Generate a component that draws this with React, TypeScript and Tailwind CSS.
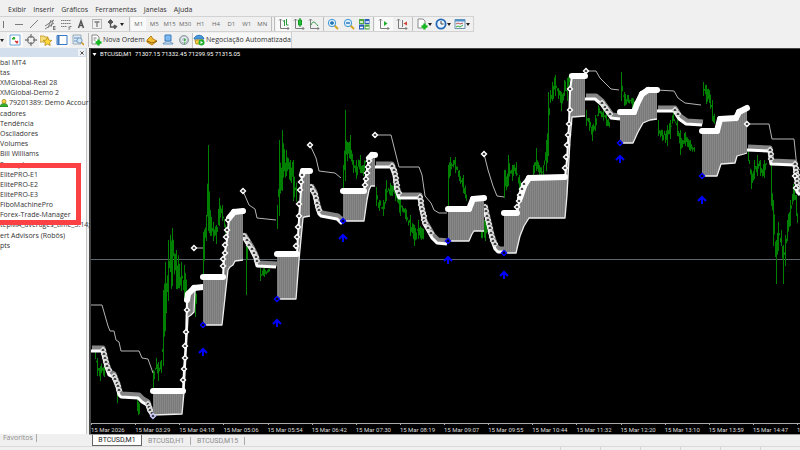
import type { ReactNode } from 'react';
import clsx from 'clsx';

type Point = [number, number];
type Range = [number, number, number];

const menus = ['Exibir', 'Inserir', 'Gráficos', 'Ferramentas', 'Janelas', 'Ajuda'];
const timeframes = ['M1', 'M5', 'M15', 'M30', 'H1', 'H4', 'D1', 'W1', 'MN'];
const times = [
  '15 Mar 2026', '15 Mar 03:29', '15 Mar 04:18', '15 Mar 05:06', '15 Mar 05:54', '15 Mar 06:42',
  '15 Mar 07:30', '15 Mar 08:19', '15 Mar 09:07', '15 Mar 09:55', '15 Mar 10:44', '15 Mar 11:32',
  '15 Mar 12:20', '15 Mar 13:10', '15 Mar 13:59', '15 Mar 14:47',
];

// outer stop line
const outer: Point[][] = [
  [[91, 305], [102, 305], [108, 326], [110, 331], [114, 331], [116, 340], [119, 342], [121, 351], [139, 351], [142, 358], [148, 359], [153, 373]],
  [[194, 248], [203, 248]],
  [[243, 191], [249, 205], [255, 209], [257, 218], [276, 220]],
  [[310, 145], [316, 158], [319, 171], [335, 173], [341, 178]],
  [[375, 135], [391, 135], [396, 155], [399, 167], [419, 167], [422, 175], [425, 196], [431, 203], [434, 210], [439, 213], [447, 213]],
  [[484, 154], [488, 170], [493, 186], [497, 196], [504, 197]],
  [[586, 71], [596, 71], [600, 78], [606, 84], [611, 89], [619, 90]],
  [[657, 90], [674, 91], [678, 98], [685, 103], [701, 105]],
  [[747, 124], [769, 124], [772, 139], [794, 139], [797, 168], [800, 170]],
];

// falling trend, drawn with a grey band on top
const falling: Point[][] = [
  [[91, 351], [102, 351], [106, 367], [109, 375], [113, 377], [117, 387], [119, 395], [121, 397], [138, 398], [142, 402], [147, 405], [149, 411], [153, 417]],
  [[243, 237], [251, 250], [255, 258], [257, 266], [276, 267]],
  [[310, 188], [314, 195], [317, 208], [319, 214], [321, 216], [337, 219], [341, 223], [343, 221]],
  [[375, 167], [391, 167], [394, 175], [396, 190], [399, 198], [419, 198], [421, 210], [424, 224], [427, 229], [432, 238], [437, 243], [447, 244]],
  [[484, 208], [488, 225], [491, 238], [495, 249], [498, 252], [504, 252]],
  [[585, 99], [595, 99], [601, 104], [606, 111], [611, 118], [620, 119]],
  [[657, 111], [674, 111], [679, 119], [686, 124], [702, 125]],
  [[747, 150], [769, 151], [771, 164], [794, 165], [796, 180], [797, 192], [800, 195]],
];

// rising trend: filled between the upper and the lower line
const rising: { top: Point[]; low: Point[] }[] = [
  {
    top: [[153, 391], [183, 391], [184, 370], [186, 340], [187, 300], [188, 294], [194, 288], [203, 287]],
    low: [[153, 415], [182, 414], [184, 392], [188, 317], [191, 315], [194, 312], [195, 290]],
  },
  {
    top: [[203, 277], [223, 277], [224, 258], [227, 240], [229, 218], [234, 212], [243, 211]],
    low: [[203, 325], [222, 325], [228, 270], [230, 267], [233, 265], [235, 261], [243, 260]],
  },
  {
    top: [[277, 254], [297, 254], [298, 235], [300, 205], [302, 175], [303, 171], [310, 171]],
    low: [[277, 299], [296, 299], [299, 260], [303, 218], [304, 217], [310, 216]],
  },
  {
    top: [[343, 191], [364, 191], [366, 175], [369, 158], [372, 155], [375, 155]],
    low: [[343, 221], [364, 221], [367, 200], [369, 190], [371, 186], [375, 186]],
  },
  {
    top: [[448, 209], [469, 209], [473, 199], [484, 198]],
    low: [[448, 241], [469, 241], [472, 234], [474, 231], [484, 231]],
  },
  {
    top: [[504, 213], [517, 213], [520, 198], [524, 186], [529, 178], [565, 177], [567, 160], [569, 125], [570, 90], [572, 76], [585, 76]],
    low: [[504, 253], [516, 253], [520, 236], [524, 226], [529, 218], [565, 218], [567, 195], [570, 140], [572, 117], [585, 116]],
  },
  {
    top: [[620, 112], [634, 112], [637, 104], [642, 94], [648, 90], [657, 90]],
    low: [[620, 143], [633, 143], [638, 132], [643, 123], [650, 120], [657, 119]],
  },
  {
    top: [[702, 131], [717, 131], [720, 119], [736, 118], [739, 112], [747, 108]],
    low: [[702, 176], [717, 176], [721, 164], [735, 163], [737, 156], [744, 154], [747, 153]],
  },
];

// x, high, low
const bars: Range[][] = [
  [[95, 352, 358], [97, 358, 375], [100, 366, 380], [104, 354, 376], [106, 366, 372]],
  [[117, 388, 402], [118, 392, 398]],
  [[137, 398, 410], [138, 402, 414], [140, 402, 414]],
  [[153, 370, 390], [156, 358, 368], [158, 362, 380], [161, 360, 372], [163, 290, 365], [165, 262, 330], [168, 240, 300], [172, 228, 285], [176, 250, 288], [181, 262, 290], [184, 265, 300], [187, 285, 300]],
  [[195, 290, 316], [197, 290, 305]],
  [[203, 232, 277], [206, 215, 240], [208, 145, 230], [210, 210, 235], [213, 222, 240], [216, 225, 243], [219, 198, 225], [222, 205, 220], [226, 225, 240]],
  [[246, 240, 294], [248, 250, 262]],
  [[260, 268, 280], [264, 268, 276], [270, 266, 272]],
  [[277, 205, 228], [279, 140, 215], [282, 130, 190], [286, 150, 175], [290, 160, 180], [293, 160, 200], [297, 190, 210]],
  [[343, 165, 191], [345, 110, 180], [347, 142, 160], [350, 135, 158], [353, 160, 172], [356, 160, 178], [360, 155, 172], [363, 165, 175], [366, 145, 170]],
  [[376, 187, 205], [379, 200, 210], [383, 200, 215], [386, 180, 200], [390, 183, 195], [395, 185, 200], [400, 195, 215], [405, 208, 218], [410, 215, 235], [414, 225, 245], [418, 220, 238], [424, 228, 240]],
  [[448, 165, 205], [450, 157, 175], [455, 157, 172], [459, 170, 180], [463, 175, 192], [467, 190, 205]],
  [[481, 230, 237], [485, 215, 240], [488, 230, 238]],
  [[504, 170, 197], [508, 155, 185], [512, 165, 180], [516, 162, 175], [519, 175, 190], [521, 180, 190]],
  [[533, 165, 178], [536, 148, 170], [539, 165, 175], [543, 165, 178], [546, 140, 170], [548, 92, 155], [550, 90, 102], [552, 82, 100], [555, 75, 95], [558, 88, 98], [561, 92, 110], [564, 80, 95], [567, 78, 100], [570, 68, 80]],
  [[586, 110, 125], [589, 118, 130], [592, 125, 140], [595, 115, 130], [598, 105, 115], [606, 112, 125], [610, 120, 132]],
  [[621, 72, 100], [624, 92, 105], [628, 95, 102], [632, 98, 108], [636, 100, 110]],
  [[658, 120, 135], [662, 130, 140], [667, 125, 145], [670, 120, 138], [673, 112, 120], [677, 120, 135], [680, 130, 154], [685, 132, 145], [690, 140, 150], [695, 148, 155]],
  [[703, 82, 95], [706, 85, 103], [709, 90, 102], [712, 100, 120], [715, 118, 130]],
  [[748, 150, 160], [751, 170, 188], [754, 160, 178], [757, 155, 175], [760, 160, 175], [764, 160, 177], [767, 152, 165]],
  [[771, 165, 205], [773, 200, 245], [776, 240, 283], [778, 222, 250], [781, 230, 245], [783, 245, 283], [785, 235, 265], [787, 220, 240], [790, 200, 225], [793, 184, 200], [796, 195, 215], [798, 200, 240]],
];

const diamonds: Point[] = [
  [194, 248], [243, 191], [310, 145], [375, 135], [484, 154], [586, 71], [747, 124],
  [187, 310], [186, 332], [185, 346], [185, 358], [184, 369], [183, 380],
  [223, 266], [223, 259], [225, 253], [225, 245], [226, 237], [227, 230], [228, 220],
  [296, 246], [297, 237], [298, 227], [299, 216], [299, 204], [300, 190], [301, 182], [302, 175],
  [365, 185], [366, 179], [367, 173], [368, 167], [369, 161],
  [517, 207], [519, 201], [520, 195], [522, 189], [524, 184],
  [570, 89], [570, 110], [569, 124], [568, 135], [567, 145], [566, 157], [565, 168],
  [795, 176], [796, 188],
];
const signals: Point[] = [[203, 325], [277, 299], [343, 221], [448, 241], [504, 253], [620, 143], [702, 176]];
const arrows: Point[] = [[203, 352], [277, 323], [343, 238], [448, 260], [504, 275], [620, 159], [702, 200]];

const join = (pts: Point[]) => pts.map((p) => p.join(',')).join(' ');
const noise = (n: number) => Math.abs(Math.sin(n * 12.9898) * 43758.5453) % 1;

function barPath(list: Range[]) {
  let d = '';
  for (let i = 0; i < list.length - 1; i++) {
    const [x0, h0, l0] = list[i];
    const [x1, h1, l1] = list[i + 1];
    for (let x = x0; x < x1; x++) {
      const t = (x - x0) / (x1 - x0);
      const high = h0 + (h1 - h0) * t;
      const low = l0 + (l1 - l0) * t;
      const trim = x === x0 ? 0 : (low - high) * 0.6;
      const a = high + trim * noise(x);
      const b = low - trim * noise(x + 7);
      d += `M${x + 0.5} ${Math.min(a, b)}V${Math.max(a, b) + 1}`;
    }
  }
  return d;
}

// marks along the steep parts of a line
function steepMarks(line: Point[]) {
  const marks: Point[] = [];
  for (let i = 0; i < line.length - 1; i++) {
    const [x0, y0] = line[i];
    const [x1, y1] = line[i + 1];
    if (y1 - y0 <= x1 - x0) continue;
    const n = Math.max(1, Math.round((y1 - y0) / 4));
    for (let k = 0; k < n; k++) {
      marks.push([Math.round(x0 + ((x1 - x0) * k) / n), Math.round(y0 + ((y1 - y0) * k) / n)]);
    }
  }
  return marks;
}

function Diamond({ at: [x, y], color = '#fff', fill = '#333' }: { at: Point; color?: string; fill?: string }) {
  return <path d={`M${x - 2.5} ${y}l2.500-2.500 2.500 2.500-2.500 2.500z`} fill={fill} stroke={color} strokeWidth="1.4" />;
}

function Chart() {
  return (
    <svg viewBox="91 49 709 374" preserveAspectRatio="xMinYMin slice" className="block h-full w-full" aria-label="BTCUSD,M1">
      <defs>
        <pattern id="hatch" width="2" height="4" patternUnits="userSpaceOnUse">
          <rect width="2" height="4" fill="#7a7a7a" />
          <rect width="1" height="4" fill="#878787" />
        </pattern>
      </defs>
      <path d="M91 259.5H800" stroke="#5c6670" />
      <g stroke="#008000" fill="none">
        {bars.map((b) => (
          <path key={b[0][0]} d={barPath(b)} />
        ))}
      </g>
      <g fill="none" stroke="#b4b4b4">
        {outer.map((l) => (
          <polyline key={l[0][0]} points={join(l)} />
        ))}
      </g>
      {falling.map((l) => (
        <g key={l[0][0]} fill="none" strokeLinejoin="round">
          <polyline points={join(l.map(([x, y]): Point => [x + 1, y - 3]))} stroke="#858585" strokeWidth="5" />
          <polyline points={join(l)} stroke="#fff" strokeWidth="3" />
          {steepMarks(l).map((m, i) => (
            <Diamond key={i} at={[m[0] + 1, m[1] - 1]} color="#e4e4e4" />
          ))}
        </g>
      ))}
      {rising.map(({ top, low }) => (
        <g key={top[0][0]} strokeLinejoin="round">
          <polygon points={join([...top, ...[...low].reverse()])} fill="url(#hatch)" />
          <polyline points={join(low)} fill="none" stroke="#eee" strokeWidth="1.3" />
          <polyline points={join(top)} fill="none" stroke="#fff" strokeWidth="2" />
          {top.slice(1).map(([x, y], i) => {
            const [px, py] = top[i];
            return Math.abs(y - py) < 13 ? (
              <path key={x} d={`M${px} ${py}L${x} ${y}`} stroke="#fff" strokeWidth="6" strokeLinecap="round" />
            ) : null;
          })}
        </g>
      ))}
      {diamonds.map((d, i) => (
        <Diamond key={i} at={d} />
      ))}
      {signals.map((d) => (
        <Diamond key={d[0]} at={d} color="#0000ff" fill="#000" />
      ))}
      <Diamond at={[153, 416]} color="#c8c8ff" />
      {arrows.map(([x, y]) => (
        <path key={x} d={`M${x} ${y + 4}V${y - 3}M${x - 4} ${y + 1}l4-4 4 4`} fill="none" stroke="#0000ff" strokeWidth="2" />
      ))}
    </svg>
  );
}

function Icon({ children }: { children: ReactNode }) {
  return (
    <svg viewBox="0 0 12 12" className="size-3 shrink-0" fill="none" stroke="#7c7c7c" aria-hidden="true">
      {children}
    </svg>
  );
}

const axes = <path d="M2.500 1v9.500H11M1 2.500l1.500-1.500 1.500 1.500M9.500 9l1.500 1.500-1.500 1.500" />;

const drawIcons: [string, ReactNode][] = [
  ['Linha horizontal', <path d="M2 6.500h8" />],
  ['Linha de tendência', <path d="M2 10l8-8" />],
  ['Canal', <path d="M1 8l9-6M1 11l9-6M4 10l3-8M7 9l2-7M9.500 8v4M9.500 8.500h2M9.500 10h2M9.500 11.500h2" />],
  ['Fibonacci', <path d="M1 2.500h10M1 5.500h10M1 8.500h6M9 12V8.500h3M9 10h2" strokeDasharray="1.500 .5" />],
  ['Texto', <path d="M3.500 10l2.500-7 2.500 7M4.500 7.500h3" strokeWidth="1.500" stroke="#555" />],
  ['Etiqueta', <><path d="M1.500 1.500h9v9h-9z" strokeDasharray="1 1" /><path d="M3.500 4h5M6 4v5" strokeWidth="1.300" /></>],
  ['Setas', <><path d="M2 4l2.500-2.500L7 4 4.500 6zM8 7l3 1.500L8.500 11z" fill="#555" stroke="#555" /><path d="M4.500 5v4h4" stroke="#555" strokeWidth="1.300" /></>],
];

function Tool({ label, active, children }: { label: string; active?: boolean; children: ReactNode }) {
  return (
    <button
      type="button"
      aria-label={label}
      className={clsx('flex h-[14px] flex-1 items-center justify-center', active && 'bg-[#f9f9f9]')}
    >
      {children}
    </button>
  );
}

function Caret() {
  return (
    <svg viewBox="0 0 4 3" className="h-[3px] w-1 shrink-0" aria-hidden="true">
      <path d="M0 0h4L2 3z" fill="#222" />
    </svg>
  );
}

function Separator() {
  return <span className="mx-px h-[14px] w-px shrink-0 bg-[#bdbdbd]" />;
}

const page = (color: string) => <path d="M2 1h5l2 2v7H2z" fill="#fff" stroke={color} />;
const plus = <path d="M8.500 5.500v6M5.500 8.500h6" stroke="#12b81e" strokeWidth="2.400" />;

function DrawingBar() {
  return (
    <div className="flex h-4 w-[474px] items-center border-y border-r border-[#d2d2d2] pr-px">
      <button type="button" aria-label="Linha vertical" className="flex w-[11px] justify-start pl-[3px] text-[#666]">
        <span className="h-[7px] w-px bg-[#777]" />
      </button>
      <div className="flex w-[109px] shrink-0">
        {drawIcons.map(([label, icon]) => (
          <Tool key={label} label={label}>
            <Icon>{icon}</Icon>
          </Tool>
        ))}
      </div>
      <Caret />
      <span className="w-1" />
      <Separator />
      <div className="flex w-[139px] shrink-0 font-['Open_Sans',sans-serif] text-[6px] text-[#666]">
        {timeframes.map((t, i) => (
          <Tool key={t} label={t} active={i === 0}>
            {t}
          </Tool>
        ))}
      </div>
      <Separator />
      <Separator />
      <div className="flex w-[46px] shrink-0">
        <Tool label="Barras" active>
          <Icon>{axes}<path d="M6.500 2v6M5 3h1.500M8.500 1v6M8.500 7h2" stroke="#2b9c3c" /></Icon>
        </Tool>
        <Tool label="Velas">
          <Icon>{axes}<path d="M7 0v9" stroke="#118822" /><path d="M5.500 2h3v5h-3z" fill="#22c034" stroke="#119922" /></Icon>
        </Tool>
        <Tool label="Linha">
          <Icon>{axes}<path d="M3 7c2-5 4-3 7 1" stroke="#2b9c3c" /></Icon>
        </Tool>
      </div>
      <Separator />
      <div className="flex w-[47px] shrink-0">
        <Tool label="Ampliar">
          <Icon><path d="M7.500 7.500L11 11" stroke="#d9a520" strokeWidth="2" /><circle cx="5" cy="5" r="3.700" fill="#d6efff" stroke="#4696d2" /><path d="M3 5h4M5 3v4" stroke="#1767aa" strokeWidth="1.300" /></Icon>
        </Tool>
        <Tool label="Reduzir">
          <Icon><path d="M7.500 7.500L11 11" stroke="#d9a520" strokeWidth="2" /><circle cx="5" cy="5" r="3.700" fill="#d6efff" stroke="#4696d2" /><path d="M3 5h4" stroke="#1767aa" strokeWidth="1.300" /></Icon>
        </Tool>
        <Tool label="Organizar janelas">
          <Icon>
            <path d="M1 1h5v5H1zM6.500 6.500h5v5h-5z" fill="#4da83f" stroke="none" />
            <path d="M6.500 1h5v5h-5zM1 6.500h5v5H1z" fill="#2a5db8" stroke="none" />
            <path d="M2 4h3M7.500 4H11M2 9.500h3M7.500 9.500H11" stroke="#fff" strokeWidth="1.500" />
          </Icon>
        </Tool>
      </div>
      <Separator />
      <div className="flex w-9 shrink-0">
        <Tool label="Rolagem automática" active>
          <Icon>{axes}<path d="M6 3l3.500 2.500L6 8z" fill="#20b030" stroke="none" /></Icon>
        </Tool>
        <Tool label="Deslocar gráfico">
          <Icon>{axes}<path d="M6.500 2v7" /><path d="M11 3.500L7.500 5.500 11 7.500z" fill="#d04030" stroke="none" /></Icon>
        </Tool>
      </div>
      <Separator />
      <div className="flex flex-1 items-center">
        <Tool label="Indicadores"><Icon>{page('#888')}{plus}</Icon><Caret /></Tool>
        <Tool label="Períodos">
          <Icon><circle cx="6" cy="6" r="4.600" fill="#e8f4ff" stroke="#2569b4" strokeWidth="1.800" /><path d="M6 3v3h2.500" stroke="#444" /></Icon>
          <Caret />
        </Tool>
        <Tool label="Modelos">
          <Icon><path d="M1 1.500h10v9H1z" fill="#eef5fa" stroke="#6d93ad" /><path d="M1 2.500h10" stroke="#4d90cc" strokeWidth="2" /><path d="M2 6l2-1 2 1 3-1" stroke="#b55" /><path d="M2 9l2-1 2 1 3-2" stroke="#3a3" /></Icon>
          <Caret />
        </Tool>
      </div>
    </div>
  );
}

function StandardBar() {
  return (
    <div className="flex h-4 w-[292px] items-center border-r border-[#cfcfcf]">
      <span className="w-[7px] shrink-0"><Caret /></span>
      <div className="flex w-[79px] shrink-0">
        <Tool label="Observação do mercado" active>
          <Icon><path d="M1 1h10v10H1z" fill="#fff" stroke="#6aa6d8" /><path d="M3 5l2-2 1 2z" stroke="#2a2" fill="#3b3" /><path d="M6 7l3 2M7 9l2-2" stroke="#d33" strokeWidth="1.500" /></Icon>
        </Tool>
        <Tool label="Janela de dados">
          <Icon><circle cx="6" cy="6" r="3.500" strokeWidth="1.300" /><path d="M6 0v4M6 8v4M0 6h4M8 6h4" strokeWidth="1.300" /></Icon>
        </Tool>
        <Tool label="Navegador" active>
          <Icon><path d="M0 2h4l1 1h3v5H0z" fill="#f4dc7a" stroke="#caa238" /><path d="M7.500 3.500l1.300 2.600 3 .4-2.200 2 .6 3-2.700-1.500L4.900 11.500l.5-3-2.100-2 2.900-.4z" fill="#ffd93b" stroke="#b98a14" strokeWidth=".8" /></Icon>
        </Tool>
        <Tool label="Terminal" active>
          <Icon><path d="M1 1.500h10v9H1z" fill="#fff" stroke="#3b78c2" /><path d="M2.500 2v8" stroke="#3b78c2" strokeWidth="2" /></Icon>
        </Tool>
        <Tool label="Testador de estratégia">
          <Icon><path d="M1 1h8v9H1z" fill="#dfeaf5" stroke="#9ab" /><path d="M2 4h5M2 7h3" stroke="#5b94cc" /><circle cx="7.500" cy="6.500" r="2.600" fill="#cfe7fa" stroke="#7899b5" /><path d="M9.500 8.500L12 11" stroke="#cc9a26" strokeWidth="1.600" /></Icon>
        </Tool>
      </div>
      <span className="w-px" />
      <Separator />
      <button type="button" className="flex w-[54px] shrink-0 items-center gap-px whitespace-nowrap">
        <Icon>{page('#888')}<path d="M3.500 4h3M3.500 6h2" />{plus}</Icon>
        Nova Ordem
      </button>
      <div className="flex w-12 shrink-0">
        <Tool label="MetaEditor">
          <Icon><path d="M1 6l4-4 2 3 4 2-5 4-5-3z" fill="#f3bd32" stroke="#b77d14" /><path d="M1 7l5 2 5-2" stroke="#8d5f10" /></Icon>
        </Tool>
        <Tool label="Conta">
          <Icon><path d="M3 1h6v6H3z" fill="#7db8ee" stroke="#3f7fc0" /><path d="M1 10c0-3 10-3 10 0z" fill="#d4e6f7" stroke="#6b94bc" /></Icon>
        </Tool>
        <Tool label="Sinais">
          <Icon><circle cx="6" cy="6" r="4.500" fill="#b9c7cc" stroke="#8e9da3" /><path d="M6 4.500A2 2 0 018 7l-2 4z" fill="#3eae4b" stroke="none" /><circle cx="6" cy="5.500" r="2.500" stroke="#f3f3f3" /></Icon>
        </Tool>
      </div>
      <button type="button" className="flex h-[15px] flex-1 items-center gap-px whitespace-nowrap border-l border-[#c5c5c5] bg-[#f8f8f8]">
        <Icon><path d="M1 5c1-5 9-5 10 0z" fill="#4a9bdb" stroke="#2c74b4" /><path d="M2 6h8l-1 4H3z" fill="#f6cf4a" stroke="#b78f20" /><circle cx="8.500" cy="8.500" r="3" fill="#20b02c" stroke="none" /><path d="M7.500 7v3l2.500-1.500z" fill="#fff" stroke="none" /></Icon>
        Negociação Automatizada
      </button>
    </div>
  );
}

function TreeItem({ children }: { children?: ReactNode }) {
  return <li className="flex h-[10px] items-center whitespace-nowrap">{children}</li>;
}

function Navigator() {
  return (
    <aside className="flex w-[87px] shrink-0 flex-col border-r border-[#c4c4c4] bg-white">
      <div className="flex h-[9px] shrink-0 items-center justify-end bg-[#d3dfed] pr-px">
        <button type="button" aria-label="Fechar" className="flex size-[7px] items-center justify-center bg-[#eef2f6]">
          <svg viewBox="0 0 5 5" className="size-1" stroke="#222" aria-hidden="true"><path d="M.5.5l4 4m0-4l-4 4" /></svg>
        </button>
      </div>
      <div className="flex flex-col gap-px pt-px">
        <ul>
          <TreeItem>bal MT4</TreeItem>
          <TreeItem>tas</TreeItem>
          <TreeItem>XMGlobal-Real 28</TreeItem>
          <TreeItem>XMGlobal-Demo 2</TreeItem>
          <TreeItem>
            <svg viewBox="0 0 10 10" className="mr-px size-2 shrink-0" aria-hidden="true">
              <path d="M0 10c0-6 10-6 10 0z" fill="#35ae30" stroke="#187c18" />
              <circle cx="5" cy="3" r="2.500" fill="#f4d63c" stroke="#a28618" />
            </svg>
            79201389: Demo Accour
          </TreeItem>
        </ul>
        <ul>
          <TreeItem>cadores</TreeItem>
          <TreeItem>Tendência</TreeItem>
          <TreeItem>Osciladores</TreeItem>
          <TreeItem>Volumes</TreeItem>
          <TreeItem>Bill Williams</TreeItem>
        </ul>
        <div className="relative">
          <ul>
            <TreeItem>Exemplos</TreeItem>
            <TreeItem>ElitePRO-E1</TreeItem>
            <TreeItem>ElitePRO-E2</TreeItem>
            <TreeItem>ElitePRO-E3</TreeItem>
            <TreeItem>FiboMachinePro</TreeItem>
            <TreeItem>Forex-Trade-Manager</TreeItem>
            <TreeItem>tepMA_averages_time_3.14;</TreeItem>
          </ul>
          <div className="absolute top-[3px] -left-2 h-[62px] w-[89px] border-[5px] border-[#fb4144]" />
        </div>
        <ul>
          <TreeItem>ert Advisors (Robôs)</TreeItem>
          <TreeItem>pts</TreeItem>
        </ul>
      </div>
    </aside>
  );
}

export default function App() {
  return (
    <div className="flex h-screen flex-col overflow-hidden bg-[#f0f0f0] font-['Open_Sans','Noto_Sans',sans-serif] text-[7px] leading-[10px] text-[#333]">
      <nav className="flex h-4 shrink-0 items-center gap-[7px] pt-1 pl-2">
        {menus.map((m) => (
          <button type="button" key={m}>{m}</button>
        ))}
      </nav>
      <DrawingBar />
      <StandardBar />
      <main className="flex min-h-0 flex-1">
        <Navigator />
        <section className="ml-[2px] flex min-w-0 flex-1 flex-col border-t border-l-2 border-[#444] bg-black">
          <div className="relative min-h-0 flex-1">
            <Chart />
            <h1 className="absolute top-0 left-0 flex items-center gap-[3px] pl-px font-[Roboto,sans-serif] text-[6px] whitespace-nowrap text-white">
              <svg viewBox="0 0 4 3" className="h-[3px] w-[5px]" aria-hidden="true"><path d="M0 0h4L2 3z" fill="#fff" /></svg>
              BTCUSD,M1&nbsp; 71307.15 71332.45 71299.95 71315.05
            </h1>
          </div>
          <ol className="flex h-[11px] shrink-0 border-t border-[#aaa] font-[Roboto,sans-serif] text-[6px] text-[#ddd]">
            {times.map((t) => (
              <li key={t} className="min-w-0 flex-1 whitespace-nowrap">
                <span className="block h-px w-px bg-[#aaa]" />
                <span className="block leading-[9px]">{t}</span>
              </li>
            ))}
            <li className="w-[3px] shrink-0">
              <span className="block h-px w-px bg-[#aaa]" />
              <span className="block leading-[9px]">1</span>
            </li>
          </ol>
        </section>
      </main>
      <div className="flex h-[13px] shrink-0 items-start border-b border-[#dadada] text-[#8c8c8c]">
        <button type="button" className="w-[37px] shrink-0 border-r border-[#aaa] pl-[3px] text-left leading-[8px]">Favoritos</button>
        <div className="ml-[52px] flex flex-1 items-start border-t border-[#999] font-[Roboto,sans-serif]">
          <button type="button" className="ml-[3px] h-[11px] w-[50px] border border-t-0 border-[#666] bg-white text-[#222]">BTCUSD,M1</button>
          <button type="button" className="w-[48px] pt-px">BTCUSD,H1</button>
          <span className="mt-[2px] h-2 w-px bg-[#aaa]" />
          <button type="button" className="w-[53px] pt-px">BTCUSD,M15</button>
          <span className="mt-[2px] h-2 w-px bg-[#aaa]" />
        </div>
      </div>
      <footer className="flex h-[3px] shrink-0 justify-end">
        {[0, 1, 2, 3, 4, 5].map((n) => (
          <span key={n} className="h-full w-10 border-l border-[#d6d6d6]" />
        ))}
      </footer>
    </div>
  );
}
